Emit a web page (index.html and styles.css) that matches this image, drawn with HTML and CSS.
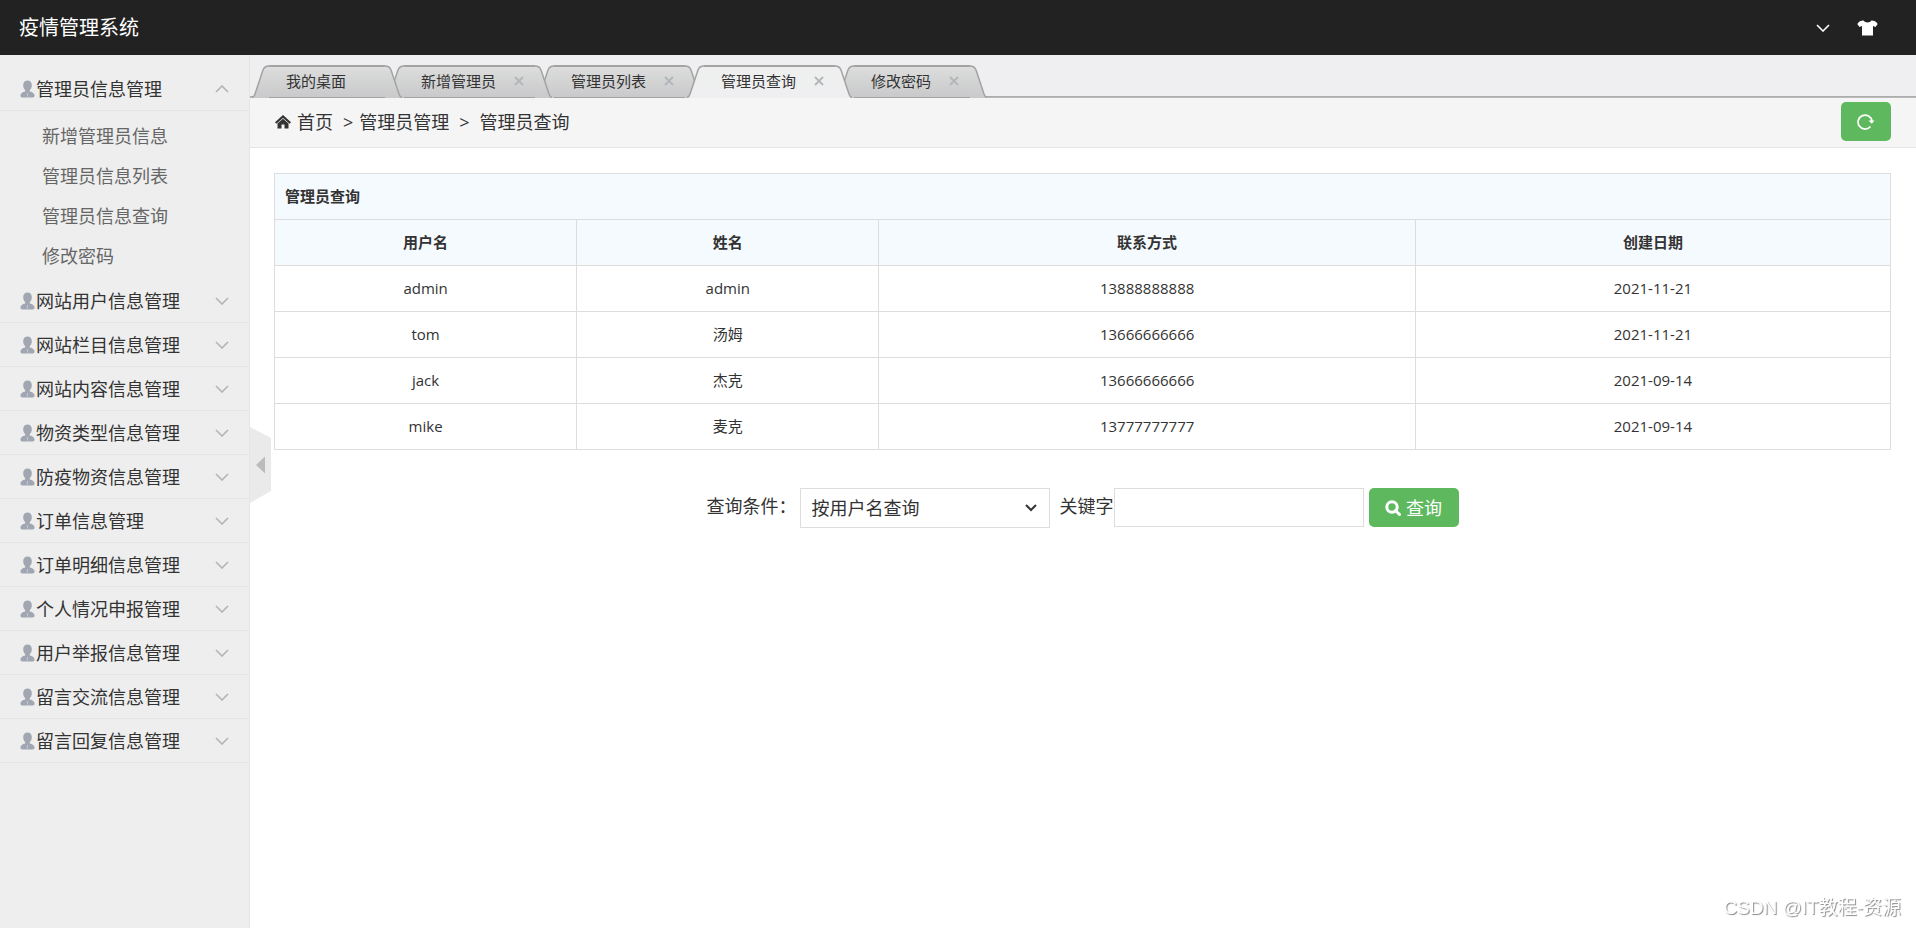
FILE: index.html
```html
<!DOCTYPE html>
<html lang="zh-CN">
<head>
<meta charset="utf-8">
<title>疫情管理系统</title>
<link rel="stylesheet" href="styles.css">
</head>
<body>
<svg class="sprite" aria-hidden="true">
  <symbol id="user" viewBox="0 0 15 18"><path d="M7.500 0.500C10.200 0.500 11.800 2.300 11.800 5.200C11.800 7.400 11.100 9 9.800 10.100V11.400C12.600 12 14.600 13.300 14.600 15.600C14.600 16.800 13.900 17.500 12.700 17.500H2.300C1.100 17.500 0.400 16.800 0.400 15.600C0.400 13.300 2.400 12 5.200 11.400V10.100C3.900 9 3.200 7.400 3.200 5.200C3.200 2.300 4.800 0.500 7.500 0.500Z" fill="#a0a7b2"/><path d="M7.500 13V16.500" stroke="#c3c8cf" stroke-width="1"/></symbol>
  <symbol id="down" viewBox="0 0 14 8"><path d="M1 1L7 7L13 1" fill="none" stroke="currentColor" stroke-width="1.600"/></symbol>
  <symbol id="up" viewBox="0 0 14 8"><path d="M1 7L7 1L13 7" fill="none" stroke="currentColor" stroke-width="1.600"/></symbol>
  <symbol id="close" viewBox="0 0 10 10"><path d="M1 1L9 9M9 1L1 9" fill="none" stroke="currentColor" stroke-width="1.800"/></symbol>
  <linearGradient id="gray" x1="0" y1="0" x2="0" y2="1"><stop offset="0" stop-color="#dcdddc"/><stop offset="1" stop-color="#c9c9cb"/></linearGradient>
  <linearGradient id="light" x1="0" y1="0" x2="0" y2="1"><stop offset="0" stop-color="#eeefee"/><stop offset="1" stop-color="#efeff1"/></linearGradient>
  <symbol id="cap-left" viewBox="0 0 17 33"><path class="cap-fill" d="M0 33C2 32 2.500 30.500 3 29L11 5Q12.500 1 17 1V33Z"/><path d="M0 32.500C2 32 2.500 30.500 3 29L11 5Q12.500 1 17 1" fill="none" stroke="#a3a3a3" stroke-width="1.500"/></symbol>
  <symbol id="cap-right" viewBox="0 0 17 33"><path class="cap-fill" d="M17 33C15 32 14.500 30.500 14 29L6 5Q4.500 1 0 1V33Z"/><path d="M17 32.500C15 32 14.500 30.500 14 29L6 5Q4.500 1 0 1" fill="none" stroke="#a3a3a3" stroke-width="1.500"/></symbol>
</svg>

<header class="topbar">
  <h1 class="brand">疫情管理系统</h1>
  <div class="tools">
    <button class="tool" type="button" aria-label="展开菜单"><svg width="14" height="8"><use href="#down"/></svg></button>
    <button class="tool" type="button" aria-label="换肤"><svg width="21" height="16" viewBox="0 0 21 16"><path d="M6.500 0.500C8 3 13 3 14.500 0.500C17 0.500 19.500 1.500 20.700 4L18.500 7L16 6V15.500H5V6L2.500 7L0.300 4C1.500 1.500 4 0.500 6.500 0.500Z" fill="#fff"/></svg></button>
  </div>
</header>

<div class="shell">
  <nav class="sidebar">
    <button class="menu" type="button"><svg class="user"><use href="#user"/></svg><span>管理员信息管理</span><svg class="arrow"><use href="#up"/></svg></button>
    <ul class="submenu">
      <li><a href="#">新增管理员信息</a></li>
      <li><a href="#">管理员信息列表</a></li>
      <li><a href="#">管理员信息查询</a></li>
      <li><a href="#">修改密码</a></li>
    </ul>
    <button class="menu" type="button"><svg class="user"><use href="#user"/></svg><span>网站用户信息管理</span><svg class="arrow"><use href="#down"/></svg></button>
    <button class="menu" type="button"><svg class="user"><use href="#user"/></svg><span>网站栏目信息管理</span><svg class="arrow"><use href="#down"/></svg></button>
    <button class="menu" type="button"><svg class="user"><use href="#user"/></svg><span>网站内容信息管理</span><svg class="arrow"><use href="#down"/></svg></button>
    <button class="menu" type="button"><svg class="user"><use href="#user"/></svg><span>物资类型信息管理</span><svg class="arrow"><use href="#down"/></svg></button>
    <button class="menu" type="button"><svg class="user"><use href="#user"/></svg><span>防疫物资信息管理</span><svg class="arrow"><use href="#down"/></svg></button>
    <button class="menu" type="button"><svg class="user"><use href="#user"/></svg><span>订单信息管理</span><svg class="arrow"><use href="#down"/></svg></button>
    <button class="menu" type="button"><svg class="user"><use href="#user"/></svg><span>订单明细信息管理</span><svg class="arrow"><use href="#down"/></svg></button>
    <button class="menu" type="button"><svg class="user"><use href="#user"/></svg><span>个人情况申报管理</span><svg class="arrow"><use href="#down"/></svg></button>
    <button class="menu" type="button"><svg class="user"><use href="#user"/></svg><span>用户举报信息管理</span><svg class="arrow"><use href="#down"/></svg></button>
    <button class="menu" type="button"><svg class="user"><use href="#user"/></svg><span>留言交流信息管理</span><svg class="arrow"><use href="#down"/></svg></button>
    <button class="menu" type="button"><svg class="user"><use href="#user"/></svg><span>留言回复信息管理</span><svg class="arrow"><use href="#down"/></svg></button>
  </nav>

  <main class="content">
    <button class="collapse" type="button" aria-label="收起侧栏"><svg width="21" height="76" viewBox="0 0 21 76"><path d="M0 0L21 11V64L0 76Z" fill="#eaeaea"/><path d="M6 38L15 29.500V46.500Z" fill="#bbb"/></svg></button>
    <div class="tabs">
      <div class="tab"><svg class="cap"><use href="#cap-left"/></svg><div class="tab-body"><a href="#">我的桌面</a><span class="no-close"></span></div><svg class="cap"><use href="#cap-right"/></svg></div>
      <div class="tab"><svg class="cap"><use href="#cap-left"/></svg><div class="tab-body"><a href="#">新增管理员</a><button class="close" type="button" aria-label="关闭"><svg><use href="#close"/></svg></button></div><svg class="cap"><use href="#cap-right"/></svg></div>
      <div class="tab"><svg class="cap"><use href="#cap-left"/></svg><div class="tab-body"><a href="#">管理员列表</a><button class="close" type="button" aria-label="关闭"><svg><use href="#close"/></svg></button></div><svg class="cap"><use href="#cap-right"/></svg></div>
      <div class="tab active"><svg class="cap"><use href="#cap-left"/></svg><div class="tab-body"><a href="#">管理员查询</a><button class="close" type="button" aria-label="关闭"><svg><use href="#close"/></svg></button></div><svg class="cap"><use href="#cap-right"/></svg></div>
      <div class="tab"><svg class="cap"><use href="#cap-left"/></svg><div class="tab-body"><a href="#">修改密码</a><button class="close" type="button" aria-label="关闭"><svg><use href="#close"/></svg></button></div><svg class="cap"><use href="#cap-right"/></svg></div>
    </div>

    <div class="crumbs">
      <svg class="home" width="16" height="14" viewBox="0 0 16 14"><path d="M0.700 8L8 1.500L15.300 8" fill="none" stroke="#333" stroke-width="2.200"/><path d="M2.500 8.600L8 3.800L13.500 8.600V13.500H9.500V9.500H6.500V13.500H2.500Z" fill="#333"/></svg>
      <a href="#">首页</a><span class="sep">&gt;</span><span>管理员管理</span><span class="sep wide">&gt;</span><span>管理员查询</span>
      <button class="btn refresh" type="button" aria-label="刷新"><svg width="18" height="16" viewBox="0 0 18 16"><path d="M13.500 12.500A7 7 0 1 1 15 7" fill="none" stroke="#fff" stroke-width="1.700"/><path d="M11.500 6.500H17.500L14.800 9.800Z" fill="#fff"/></svg></button>
    </div>

    <div class="page">
      <table class="grid">
        <colgroup><col class="c1"><col class="c1"><col class="c3"><col class="c4"></colgroup>
        <thead>
          <tr><th class="caption" colspan="4">管理员查询</th></tr>
          <tr><th>用户名</th><th>姓名</th><th>联系方式</th><th>创建日期</th></tr>
        </thead>
        <tbody>
          <tr><td>admin</td><td>admin</td><td>13888888888</td><td>2021-11-21</td></tr>
          <tr><td>tom</td><td>汤姆</td><td>13666666666</td><td>2021-11-21</td></tr>
          <tr><td>jack</td><td>杰克</td><td>13666666666</td><td>2021-09-14</td></tr>
          <tr><td>mike</td><td>麦克</td><td>13777777777</td><td>2021-09-14</td></tr>
        </tbody>
      </table>

      <form class="search">
        <label class="cond" for="field">查询条件：</label>
        <select id="field" class="field"><option>按用户名查询</option></select>
        <label class="key" for="keyword">关键字</label>
        <input id="keyword" class="keyword" type="text">
        <button class="btn submit" type="button"><svg width="16" height="16" viewBox="0 0 16 16"><circle cx="7" cy="7" r="5.200" fill="none" stroke="#fff" stroke-width="3"/><path d="M10.500 10.500L14.500 14.500" stroke="#fff" stroke-width="3" stroke-linecap="round"/></svg>查询</button>
      </form>
    </div>
  </main>
</div>
<div class="watermark">CSDN @IT教程-资源</div>
</body>
</html>
```

FILE: styles.css
```css
* { box-sizing: border-box; }
body {
  margin: 0;
  min-height: 100vh;
  display: flex;
  flex-direction: column;
  background: #fff;
  color: #333;
  font: 18px/24px "Open Sans", "Noto Sans CJK SC", sans-serif;
}
a { color: inherit; text-decoration: none; }
button { padding: 0; border: 0; background: none; color: inherit; font: inherit; cursor: pointer; }
svg { display: block; flex: none; }
.sprite { position: absolute; width: 0; height: 0; }

.topbar {
  display: flex;
  align-items: center;
  justify-content: space-between;
  height: 55px;
  padding: 0 38px 0 19px;
  background: #222;
  color: #fff;
}
.brand { margin: 0; font-size: 20px; font-weight: 400; }
.tools { display: flex; align-items: center; gap: 27px; }

.shell { display: flex; flex: 1; }
.sidebar {
  flex: none;
  width: 250px;
  padding-top: 12px;
  background: #eee;
  border-right: 1px solid #e5e5e5;
}
.menu {
  display: flex;
  align-items: center;
  width: 100%;
  height: 44px;
  padding: 0 20px;
  border-bottom: 1px solid #e5e5e5;
}
.menu .user { width: 15px; height: 18px; margin-right: 1px; }
.menu .arrow { width: 14px; height: 8px; margin-left: auto; color: #b4b4b4; }
.submenu { margin: 0; padding: 5px 0 3px; list-style: none; }
.submenu a { display: block; padding-left: 42px; line-height: 40px; color: #666; }

.content { position: relative; flex: 1; min-width: 0; }
.collapse { position: absolute; left: 0; top: 372px; }

.tabs {
  display: flex;
  align-items: flex-end;
  height: 43px;
  padding-left: 2px;
  background: linear-gradient(#a6a6a6, #c0c0c0) bottom / 100% 2px no-repeat #efeef0;
}
.tab { position: relative; display: flex; height: 33px; margin-right: -15px; fill: url(#gray); }
.tab:nth-child(1) { z-index: 5; }
.tab:nth-child(2) { z-index: 4; }
.tab:nth-child(3) { z-index: 3; }
.tab:nth-child(5) { z-index: 1; }
.tab.active { z-index: 6; fill: url(#light); }
.cap { width: 17px; height: 33px; }
.tab-body {
  display: flex;
  align-items: center;
  gap: 18px;
  padding: 0 11px 2px 17px;
  border-top: 2px solid #a3a3a3;
  border-bottom: 1px solid #a3a3a3;
  background: linear-gradient(#dcdddc, #c9c9cb);
  font-size: 15px;
}
.active .tab-body { background: linear-gradient(#eeefee, #efeff1); border-bottom-color: #efeff1; }
.close, .no-close, .close svg { width: 10px; height: 10px; }
.close { color: #b2b6bb; }

.crumbs {
  display: flex;
  align-items: center;
  height: 50px;
  padding: 0 25px 2px;
  background: #f5f5f5;
  border-bottom: 1px solid #e5e5e5;
}
.home { margin-right: 6px; }
.sep { margin: 0 6px 0 10px; }
.sep.wide { margin-right: 10px; }
.btn {
  display: flex;
  align-items: center;
  justify-content: center;
  height: 39px;
  border-radius: 5px;
  background: #5eb95e;
  color: #fff;
}
.refresh { width: 50px; margin-left: auto; }

.page { padding: 25px 25px 0 24px; }
.grid {
  width: 100%;
  table-layout: fixed;
  border-collapse: collapse;
  font-size: 15px;
  text-align: center;
}
.c1 { width: 18.7%; }
.c3 { width: 33.2%; }
.c4 { width: 29.4%; }
.grid th, .grid td { height: 46px; padding: 0 10px 2px; border: 1px solid #ddd; }
.grid th { background: #f5fafe; font-weight: 700; }
.grid .caption { text-align: left; }

.search { display: flex; justify-content: center; align-items: flex-start; margin-top: 38px; }
.search label { line-height: 36px; }
.cond { margin-right: 3px; }
.key { margin-left: 10px; }
.field, .keyword {
  width: 250px;
  height: 40px;
  padding: 0 11px;
  border: 1px solid #ddd;
  border-radius: 0;
  background: #fff;
  color: #333;
  font: inherit;
}
.keyword { height: 39px; }
.field {
  appearance: none;
  background: url("data:image/svg+xml,%3Csvg xmlns='http://www.w3.org/2000/svg' width='12' height='8'%3E%3Cpath d='M1 1L6 6L11 1' fill='none' stroke='%23333' stroke-width='2'/%3E%3C/svg%3E") right 12px center no-repeat #fff;
}
.submit { width: 90px; gap: 5px; margin-left: 5px; }

.watermark {
  position: fixed;
  right: 15px;
  bottom: 7px;
  color: #fff;
  font: 19px/26px "Liberation Sans", "Noto Sans CJK SC", sans-serif;
  text-shadow: 1px 1px 1px #888;
}
```
